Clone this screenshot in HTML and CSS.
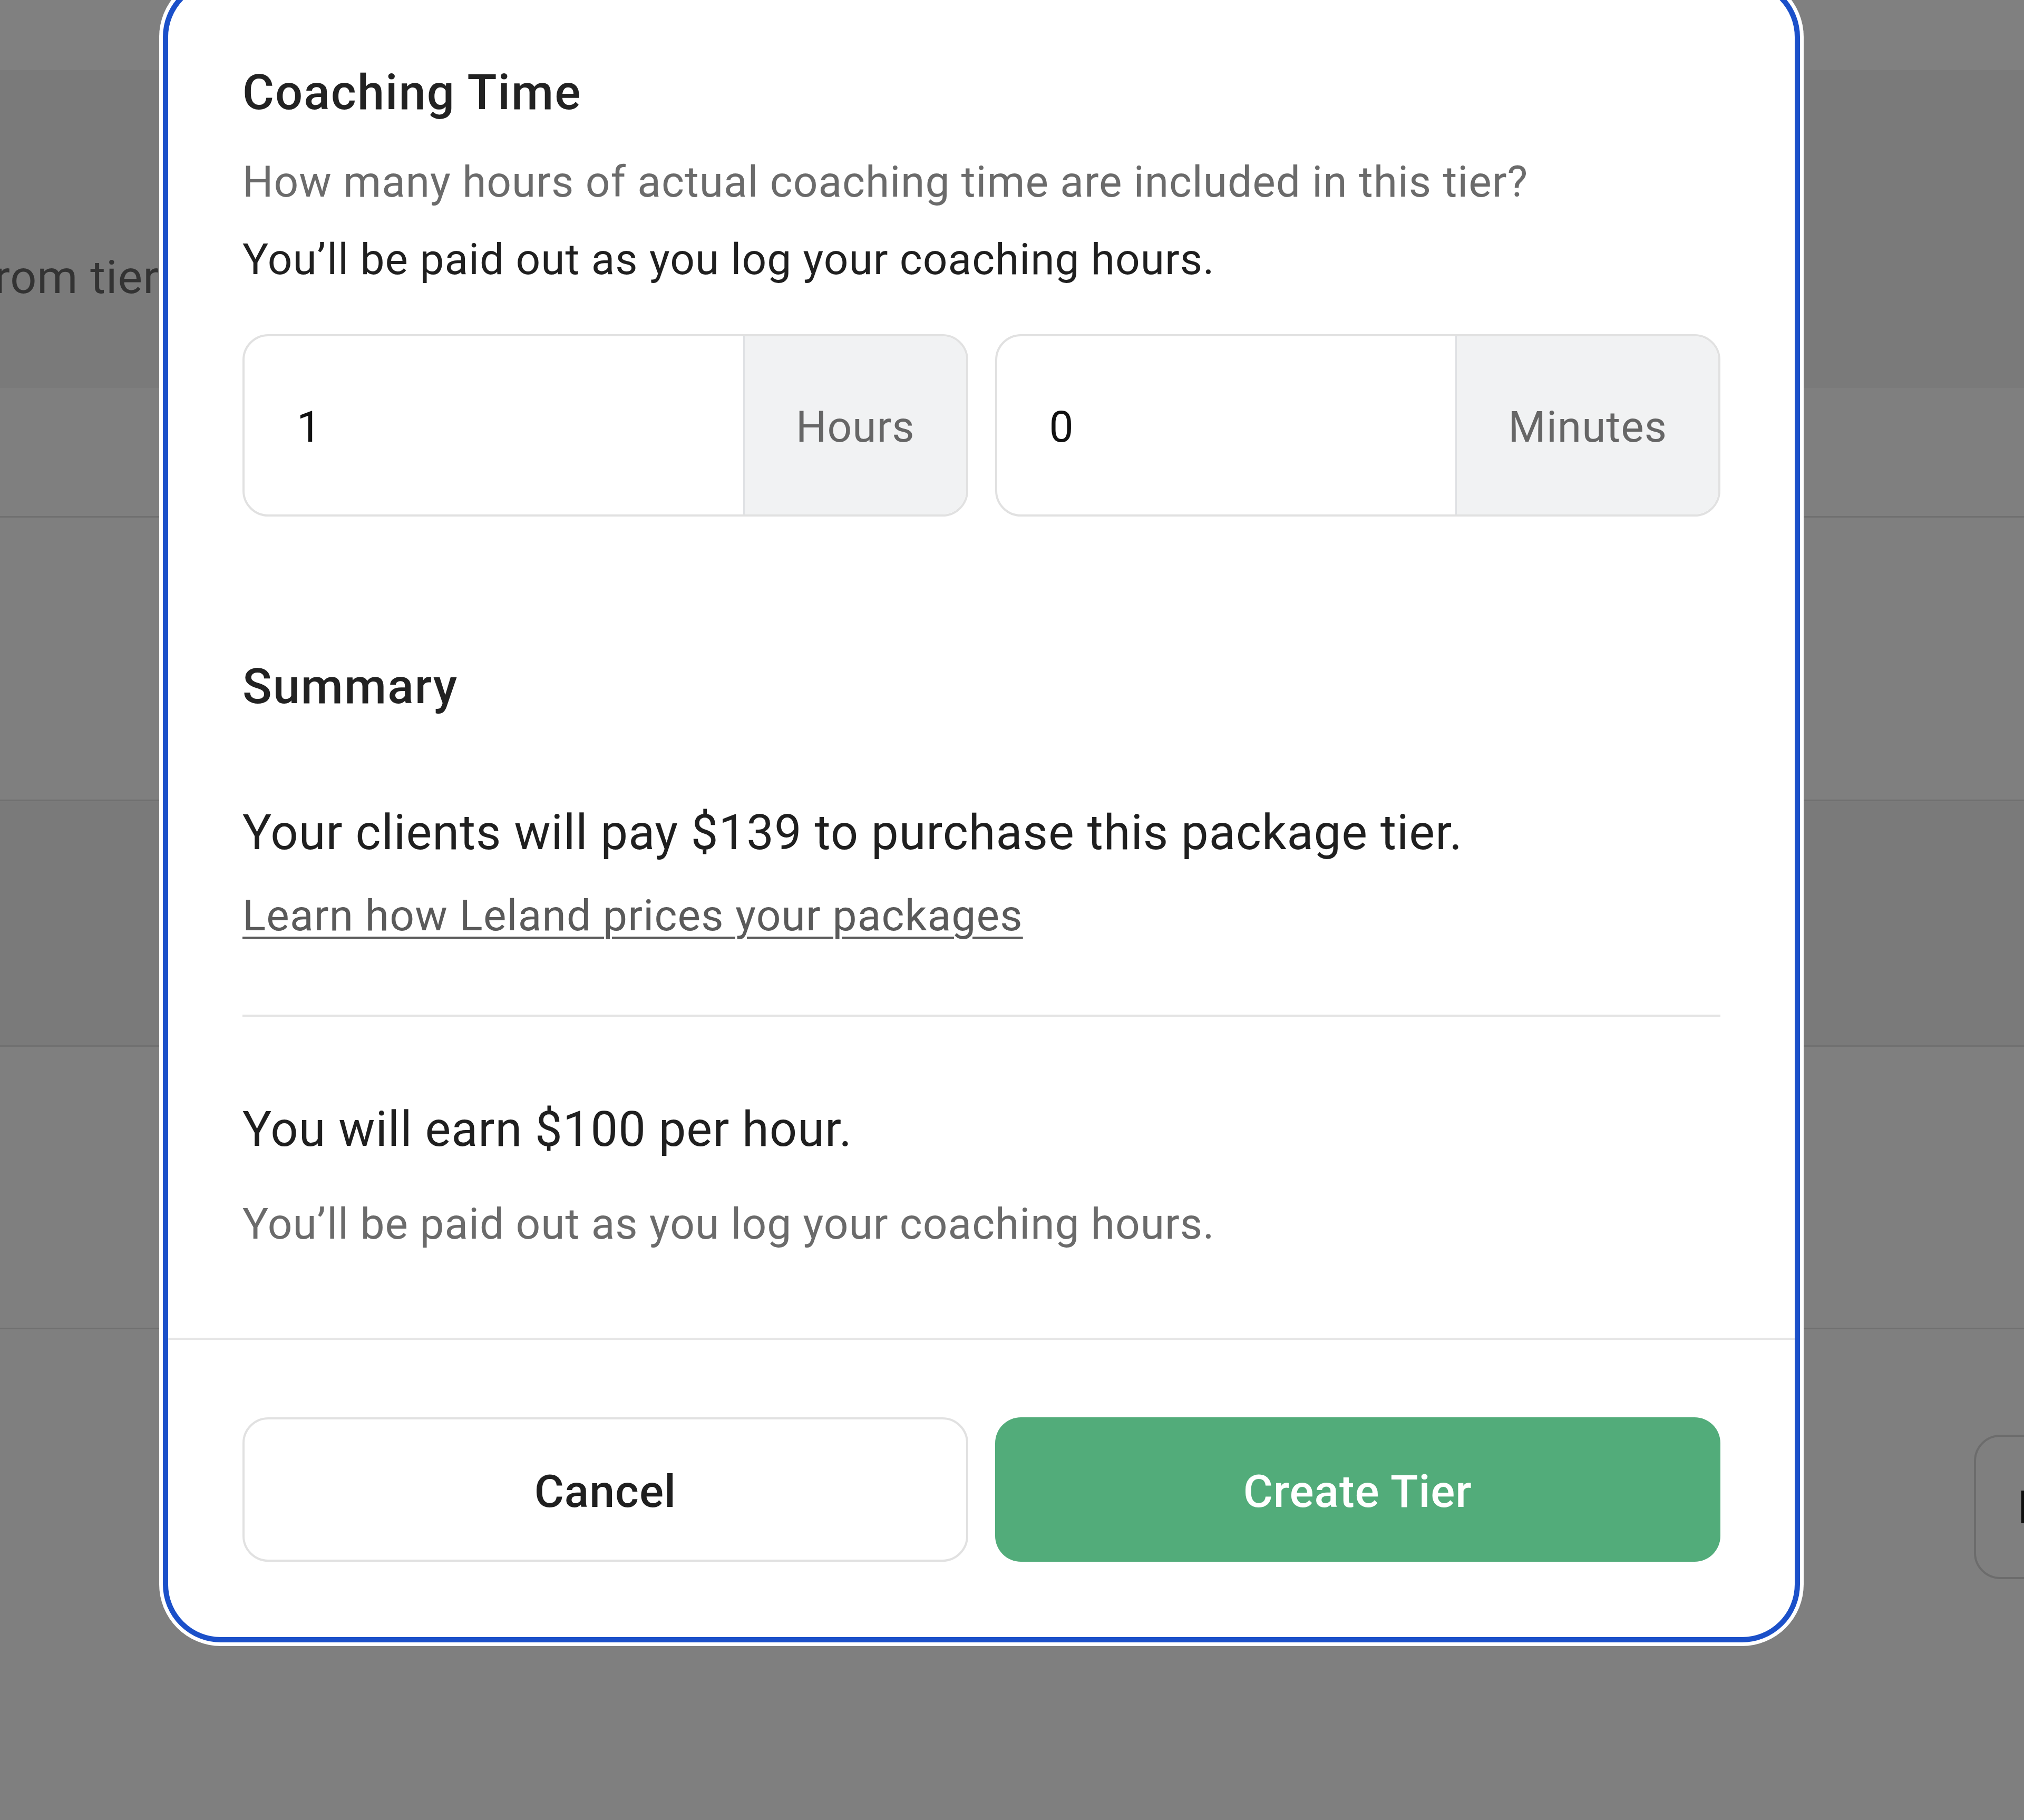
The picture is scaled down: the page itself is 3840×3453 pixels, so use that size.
FILE: index.html
```html
<!DOCTYPE html>
<html lang="en">
<head>
    <meta charset="UTF-8">
    <meta name="viewport" content="width=device-width, initial-scale=1.0">
    <title>Create Tier</title>
    <link rel="stylesheet" href="styles.css">
</head>
<body>
    <div class="page">
        <div class="row row-top"></div>
        <div class="row row-dark">
            <div class="cell-label">Remove from tier</div>
        </div>
        <div class="row row-line row-c"></div>
        <div class="row row-line row-d"></div>
        <div class="row row-line row-dark row-e"></div>
        <div class="row row-line row-f"></div>
        <div class="row row-actions">
            <button class="page-button">Edit</button>
        </div>
    </div>

    <div class="modal">
        <div class="modal-body">
            <h2 class="section-title">Coaching Time</h2>
            <p class="hint">How many hours of actual coaching time are included in this tier?</p>
            <p class="note">You’ll be paid out as you log your coaching hours.</p>

            <div class="time-row">
                <div class="field">
                    <div class="field-value">1</div>
                    <div class="field-addon">Hours</div>
                </div>
                <div class="field">
                    <div class="field-value">0</div>
                    <div class="field-addon">Minutes</div>
                </div>
            </div>

            <h2 class="section-title summary-title">Summary</h2>
            <p class="summary-line">Your clients will pay $139 to purchase this package tier.</p>
            <a class="learn-link" href="#">Learn how Leland prices your packages</a>
            <hr class="divider">
            <p class="summary-line earn-line">You will earn $100 per hour.</p>
            <p class="hint payout">You’ll be paid out as you log your coaching hours.</p>
        </div>
        <div class="modal-footer">
            <button class="btn btn-cancel">Cancel</button>
            <button class="btn btn-create">Create Tier</button>
        </div>
    </div>
</body>
</html>
```

FILE: styles.css
```css
body {
    margin: 0;
    font-family: Roboto, "Liberation Sans", sans-serif;
    background-color: #7f7f7f;
    height: 3453px;
    overflow: hidden;
    position: relative;
}
.page {
    display: flex;
    flex-direction: column;
}
.row {
    background-color: #7f7f7f;
}
.row-top {
    height: 133px;
    background-color: #808080;
}
.row-dark {
    background-color: #7a7a7a;
}
.row-line {
    border-bottom: 3px solid #707070;
}
.row:nth-child(2) {
    height: 603px;
    display: flex;
    align-items: flex-start;
}
.cell-label {
    width: 302px;
    margin-top: 338px;
    text-align: right;
    white-space: nowrap;
    direction: rtl;
    font-size: 88px;
    line-height: 110px;
    letter-spacing: 1px;
    color: #333;
}
.row-c {
    height: 243px;
}
.row-d {
    height: 535px;
}
.row-e {
    height: 463px;
}
.row-f {
    height: 533px;
}
.row-actions {
    display: flex;
    justify-content: flex-end;
    padding-top: 200px;
    overflow: hidden;
}
.page-button {
    width: 400px;
    height: 274px;
    margin-right: -305px;
    background: transparent;
    border: 4px solid #6c6c6c;
    border-radius: 50px;
    font-family: Roboto, sans-serif;
    font-size: 88px;
    font-weight: 700;
    color: #111;
    text-align: left;
    padding-left: 80px;
}

/* modal overlay */
.modal {
    position: absolute;
    left: 309px;
    top: -40px;
    width: 3106px;
    box-sizing: border-box;
    background-color: #fff;
    border: 10px solid #1b50c9;
    border-radius: 110px;
    box-shadow: 0 0 0 7px #fff;
}
.modal-body {
    padding: 146px 141px 156px;
}
.section-title {
    margin: 0;
    font-size: 92px;
    line-height: 120px;
    font-weight: 500;
    letter-spacing: 2px;
    color: #222;
}
.hint {
    margin: 49px 0 0;
    font-size: 82px;
    line-height: 120px;
    letter-spacing: 1px;
    color: #6b6b6b;
}
.note {
    margin: 27px 0 0;
    font-size: 82px;
    line-height: 120px;
    letter-spacing: 1px;
    color: #1f1f1f;
}
.time-row {
    margin-top: 82px;
    display: grid;
    grid-template-columns: 1fr 1fr;
    gap: 51px;
}
.field {
    display: flex;
    height: 346px;
    box-sizing: border-box;
    border: 4px solid #e1e1e1;
    border-radius: 49px;
    overflow: hidden;
    font-size: 82px;
    letter-spacing: 1px;
}
.field-value {
    flex: 1;
    display: flex;
    align-items: center;
    padding: 6px 0 0 99px;
    color: #111;
}
.field-addon {
    display: flex;
    align-items: center;
    padding: 6px 97px 0;
    background-color: #f1f2f3;
    border-left: 3px solid #dfe1e4;
    color: #666;
}
.summary-title {
    margin-top: 263px;
}
.summary-line {
    margin: 152px 0 0;
    font-size: 92px;
    line-height: 130px;
    letter-spacing: 1px;
    color: #1f1f1f;
}
.learn-link {
    display: block;
    margin-top: 32px;
    font-size: 82px;
    line-height: 120px;
    letter-spacing: 1.2px;
    color: #5a5a5a;
    text-decoration: underline;
    text-decoration-thickness: 4px;
    text-underline-offset: 12px;
}
.divider {
    margin: 128px 0 0;
    border: 0;
    border-top: 4px solid #e4e4e4;
}
.earn-line {
    margin-top: 149px;
}
.payout {
    margin-top: 54px;
}
.modal-footer {
    border-top: 4px solid #e6e6e6;
    padding: 147px 141px 143px;
    display: grid;
    grid-template-columns: 1fr 1fr;
    gap: 51px;
}
.btn {
    height: 274px;
    padding-top: 8px;
    border-radius: 49px;
    font-family: Roboto, sans-serif;
    font-size: 86px;
    font-weight: 500;
    letter-spacing: 1px;
    cursor: pointer;
}
.btn-cancel {
    background-color: #fff;
    border: 4px solid #e1e1e1;
    color: #1f1f1f;
}
.btn-create {
    background-color: #52ac7a;
    border: 0;
    color: #fff;
}
```
